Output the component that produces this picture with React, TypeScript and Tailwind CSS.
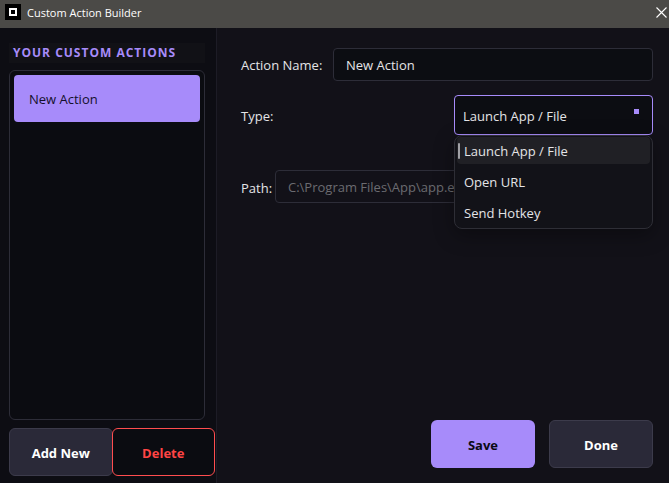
import { useState } from "react";

const ACTION_TYPES = ["Launch App / File", "Open URL", "Send Hotkey"];

function TitleBar() {
  return (
    <header className="flex h-7 shrink-0 items-center justify-between bg-[#4b4a47] pb-1 pl-[5px] pr-0.5 text-white">
      <div className="flex items-center gap-1.5">
        <svg width="16" height="16" viewBox="0 0 16 16" aria-hidden="true">
          <rect width="16" height="16" fill="#000" />
          <rect x="5" y="5" width="6" height="6" fill="none" stroke="#fff" strokeWidth="2" />
        </svg>
        <h1 className="pt-0.5 text-[11px] leading-4">Custom Action Builder</h1>
      </div>
      <button type="button" aria-label="Close">
        <svg width="11" height="11" viewBox="0 0 11 11" aria-hidden="true">
          <path d="M0.5 0.5L10.5 10.5M10.5 0.5L0.5 10.5" stroke="#fff" strokeWidth="1.1" />
        </svg>
      </button>
    </header>
  );
}

function Sidebar() {
  return (
    <aside className="flex w-[217px] shrink-0 flex-col border-r border-[#1d1c26] bg-[#0d0d13] pb-[7px] pl-[9px] pr-px pt-[15px]">
      <h2 className="mr-2.5 bg-[#111116] pl-1 text-xs leading-5 font-bold tracking-[1px] text-[#a78bfa]">
        YOUR CUSTOM ACTIONS
      </h2>

      <ul className="mr-2.5 mt-[7px] flex-1 rounded-md border border-[#2d2d38] bg-[#0b0c11] p-1">
        <li>
          <button
            type="button"
            className="h-[47px] w-full rounded bg-[#a78bfa] px-[15px] text-left text-[#14102b]"
          >
            New Action
          </button>
        </li>
      </ul>

      <div className="mt-2 flex">
        <button
          type="button"
          className="h-12 flex-1 rounded-md border border-[#3c3b4b] bg-[#2a2938] pt-0.5 font-bold text-white"
        >
          Add New
        </button>
        <button
          type="button"
          className="-ml-px h-12 flex-1 rounded-md border border-[#ff4d4f] bg-[#0b0c11] pt-0.5 font-bold text-[#ff4444]"
        >
          Delete
        </button>
      </div>
    </aside>
  );
}

function TypeSelect() {
  const [type, setType] = useState(ACTION_TYPES[0]);
  const [open, setOpen] = useState(true);

  const pick = (option: string) => {
    setType(option);
    setOpen(false);
  };

  return (
    <div className="relative w-[199px]">
      <select
        id="action-type"
        value={type}
        onChange={(e) => setType(e.target.value)}
        onMouseDown={(e) => {
          e.preventDefault();
          setOpen(!open);
        }}
        className="block h-10 w-full appearance-none rounded border border-[#a78bfa] bg-[#0c0d12] px-2 pt-0.5 text-[#e4e4e7] outline-none"
      >
        {ACTION_TYPES.map((option) => (
          <option key={option}>{option}</option>
        ))}
      </select>
      <span className="pointer-events-none absolute right-3.5 top-3.5 size-[5px] bg-[#a78bfa]" />

      {/* Open menu */}
      {open && (
        <ul className="absolute left-0 top-full z-10 flex w-full flex-col gap-1 rounded-lg border border-[#2e2e36] bg-[#121218] px-0.5 pb-0.5 pt-px shadow-[0_6px_20px_rgba(0,0,0,0.35)]">
          {ACTION_TYPES.map((option) => (
            <li key={option}>
              <button
                type="button"
                onClick={() => pick(option)}
                className={
                  option === type
                    ? "flex h-[27px] w-full items-center gap-1 rounded bg-[#202025] pl-px text-left"
                    : "flex h-[27px] w-full items-center gap-1 rounded pl-px text-left"
                }
              >
                <span
                  className={
                    option === type
                      ? "h-4 w-0.5 rounded-full bg-[#a1a1a6]"
                      : "h-4 w-0.5"
                  }
                />
                {option}
              </button>
            </li>
          ))}
        </ul>
      )}
    </div>
  );
}

export default function App() {
  const [name, setName] = useState("New Action");
  const [path, setPath] = useState("");

  return (
    <div className="flex min-h-screen flex-col bg-[#121118] font-['Open_Sans','Noto_Sans',sans-serif] text-[13px] leading-5 text-[#e4e4e7]">
      <TitleBar />
      <div className="flex flex-1">
        <Sidebar />

        <main className="flex min-w-0 flex-1 flex-col justify-between pb-[15px] pl-6 pr-4 pt-5">
          <form>
            <div className="flex items-center">
              <label htmlFor="action-name" className="w-[92px] shrink-0">
                Action Name:
              </label>
              <input
                id="action-name"
                type="text"
                value={name}
                onChange={(e) => setName(e.target.value)}
                className="h-[33px] min-w-0 flex-1 rounded border border-[#2d2d38] bg-[#0c0d12] px-3 outline-none"
              />
            </div>

            <div className="mt-3.5 flex items-center justify-between">
              <label htmlFor="action-type" className="pt-0.5">
                Type:
              </label>
              <TypeSelect />
            </div>

            <div className="mt-[35px] flex items-center">
              <label htmlFor="action-path" className="w-[34px] shrink-0 pt-0.5">
                Path:
              </label>
              <input
                id="action-path"
                type="text"
                value={path}
                onChange={(e) => setPath(e.target.value)}
                placeholder="C:\Program Files\App\app.exe"
                className="h-[33px] min-w-0 flex-1 rounded border border-[#2d2d38] bg-[#121118] px-3 outline-none placeholder:text-[#6b6b70]"
              />
            </div>
          </form>

          <div className="flex justify-end gap-3.5">
            <button
              type="button"
              className="h-12 w-[104px] rounded-md bg-[#a78bfa] pt-0.5 font-bold text-[#0b0a14]"
            >
              Save
            </button>
            <button
              type="button"
              className="h-12 w-[104px] rounded-md border border-[#3c3b4b] bg-[#2a2938] pt-0.5 font-bold text-white"
            >
              Done
            </button>
          </div>
        </main>
      </div>
    </div>
  );
}
